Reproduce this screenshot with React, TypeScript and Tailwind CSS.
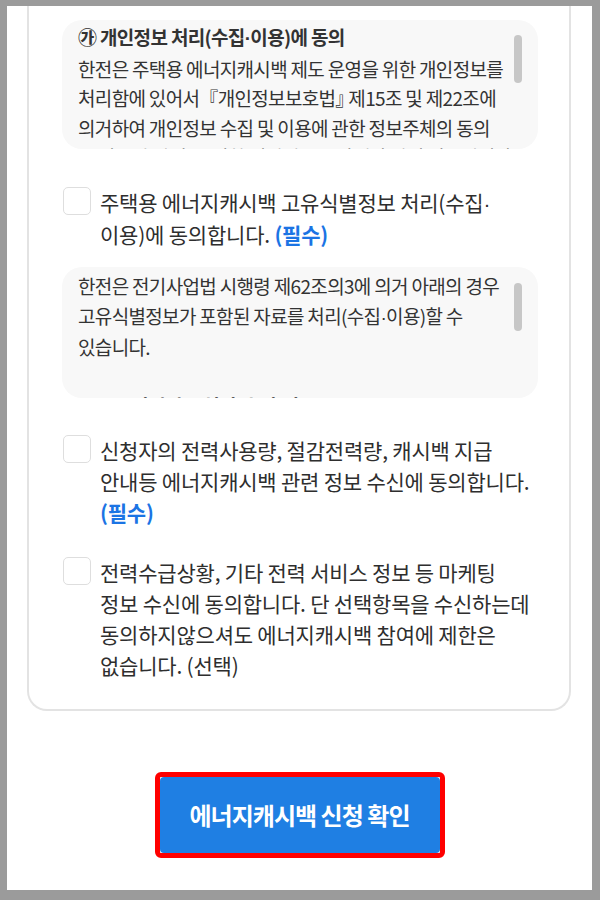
import type { ReactNode } from "react";

// Noto CJK draws "·" full width; borrow a Latin font for the tight middle dot
function Dot() {
  return <span className="font-['Liberation_Sans',sans-serif]">·</span>;
}

function Checkbox() {
  return (
    <span className="ml-px h-[28px] w-[28px] shrink-0 rounded-[5px] border-[1.5px] border-[#dedede] bg-white" />
  );
}

function Required() {
  return <span className="font-bold text-[#1b74e4]">(필수)</span>;
}

function AgreeRow({ className, children }: { className: string; children: ReactNode }) {
  return (
    <div className={`flex items-start gap-[9px] ${className}`}>
      <Checkbox />
      <p className="whitespace-nowrap text-[21px] leading-[31px] tracking-[-0.01em] text-[#2e2e2e]">
        {children}
      </p>
    </div>
  );
}

function TermsBox({
  className,
  barClass,
  children,
}: {
  className: string;
  barClass: string;
  children: ReactNode;
}) {
  return (
    <div className={`relative overflow-hidden rounded-[20px] bg-[#f8f8f8] pl-[16px] ${className}`}>
      <div className="whitespace-nowrap text-[19px] leading-[29.5px] tracking-[-0.035em] text-[#333]">
        {children}
      </div>
      {/* scrollbar thumb */}
      <span className={`absolute right-[16px] h-[48px] w-[8px] rounded-full bg-[#c7c7c7] ${barClass}`} />
    </div>
  );
}

export default function App() {
  return (
    <div className="h-[900px] w-[600px] bg-[#9b9b9b] pb-[10px] pl-[7px] pr-[8px] pt-[6px] font-['Noto_Sans_CJK_KR',sans-serif]">
      <div className="flex h-full flex-col overflow-hidden bg-white">
        <div className="mx-[20px] mr-[21px] rounded-b-[20px] border-2 border-t-0 border-[#e3e3e3] pb-[28px] pl-[33px] pr-[31px] pt-[14px]">
          <TermsBox className="h-[129px] pt-[2px]" barClass="top-[15px]">
            <p className="font-bold">
              ㉮ 개인정보 처리(수집<Dot />이용)에 동의
            </p>
            <p>한전은 주택용 에너지캐시백 제도 운영을 위한 개인정보를</p>
            <p>
              처리함에 있어서<span className="tracking-[-5px]"> </span>『개인정보보호법
              <span className="tracking-[-6px]">』</span>제15조 및 제22조에
            </p>
            <p>의거하여 개인정보 수집 및 이용에 관한 정보주체의 동의</p>
            <p>를 받고자 하며, 수집한 개인정보는 아래와 같이 이용됩니다.</p>
          </TermsBox>

          <AgreeRow className="mt-[38px]">
            주택용 에너지캐시백 고유식별정보 처리(수집<Dot />
            <br />
            이용)에 동의합니다. <Required />
          </AgreeRow>

          <TermsBox className="mt-[17px] h-[131px] pt-[4px]" barClass="top-[16px]">
            <p>한전은 전기사업법 시행령 제62조의3에 의거 아래의 경우</p>
            <p>
              고유식별정보가 포함된 자료를 처리(수집<Dot />이용)할 수
            </p>
            <p>있습니다.</p>
            <p>&nbsp;</p>
            <p className="font-bold">
              1. 고유식별정보 처리(수집<Dot />이용)
            </p>
          </TermsBox>

          <AgreeRow className="mt-[37px]">
            신청자의 전력사용량, 절감전력량, 캐시백 지급
            <br />
            안내등 에너지캐시백 관련 정보 수신에 동의합니다.
            <br />
            <Required />
          </AgreeRow>

          <AgreeRow className="mt-[29px]">
            전력수급상황, 기타 전력 서비스 정보 등 마케팅
            <br />
            정보 수신에 동의합니다. 단 선택항목을 수신하는데
            <br />
            동의하지않으셔도 에너지캐시백 참여에 제한은
            <br />
            없습니다. (선택)
          </AgreeRow>
        </div>

        <div className="mt-[61px] self-center rounded-[6px] border-[5px] border-[#ff0000]">
          <button className="flex h-[76px] w-[280px] items-center justify-center rounded-[4px] bg-[#1f7fe3] text-[24px] font-bold tracking-[-0.04em] text-white">
            에너지캐시백 신청 확인
          </button>
        </div>
      </div>
    </div>
  );
}
